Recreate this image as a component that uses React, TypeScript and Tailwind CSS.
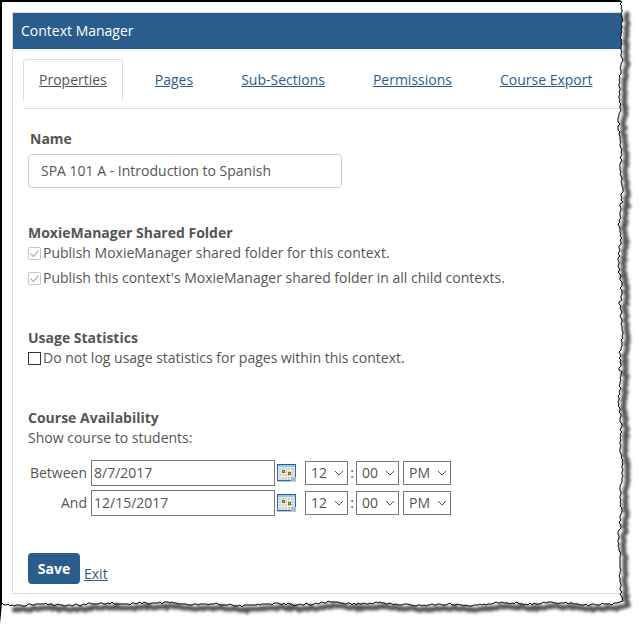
import React from "react";

function n(i: number) {
  const s = Math.sin(i * 12.9898) * 43758.5453;
  return s - Math.floor(s);
}
const edgeR: number[][] = [];
for (let i = 0, y = 0; y < 596; i++, y += 2) {
  const wave = Math.sin(y / 23) * 1.1 + Math.sin(y / 7.3) * 0.9;
  edgeR.push([Math.round(620.5 + wave + (n(i) - 0.5) * 2.5), y]);
}
const edgeB: number[][] = [[622, 597], [623, 601], [617, 603]];
for (let i = 0, x = 614; x > 0; i++, x -= 2) {
  const wave = Math.sin(x / 31) * 0.9 + Math.sin(x / 9.1) * 0.7;
  edgeB.push([x, Math.round(604 + wave + (n(i + 400) - 0.5) * 2.2)]);
}
const pts = [...edgeR, ...edgeB];
const poly = pts.map((p) => p.join(",")).join(" ");
const shadow = pts
  .slice(4, -3)
  .map((p) => `${p[0] + 5},${p[1] + 4}`)
  .join(" ");

function TornEdge() {
  return (
    <svg className="absolute inset-0 pointer-events-none" width="640" height="624" viewBox="0 0 640 624">
      <defs>
        <filter id="blur" x="-5%" y="-5%" width="110%" height="110%">
          <feGaussianBlur stdDeviation="1.6" />
        </filter>
      </defs>
      <polygon points={`${poly} 0,624 640,624 640,0`} fill="#fff" />
      <polyline points={shadow} fill="none" stroke="#555" strokeWidth="5" filter="url(#blur)" />
      <polyline points={poly} fill="none" stroke="#000" strokeWidth="1" />
    </svg>
  );
}

function CalIcon() {
  return (
    <svg width="19" height="18" viewBox="0 0 19 18" className="shrink-0">
      <rect x="0.5" y="0.5" width="18" height="16" fill="#dfe8f2" stroke="#2a6aa8" />
      <rect x="1" y="0" width="17" height="1" fill="#1f5c99" />
      <rect x="1" y="1" width="17" height="2" fill="#9cc4e8" />
      <rect x="2" y="4" width="15" height="12" fill="#cfcfcf" />
      <path d="M4.5 4v12M7.5 4v12M10.5 4v12M13.5 4v12M2 6.5h15M2 9.5h15M2 12.5h15" stroke="#ececec" strokeWidth="1" />
      <rect x="5" y="6" width="3" height="3" fill="#5f7f00" />
      <rect x="6" y="7" width="1" height="1" fill="#c8d800" />
      <rect x="11" y="8" width="3" height="3" fill="#5f7f00" />
      <rect x="12" y="9" width="1" height="1" fill="#c8d800" />
      <rect x="14" y="13" width="5" height="4" fill="#a9bccf" />
      <rect x="0" y="17" width="19" height="1" fill="#c4c4c4" />
    </svg>
  );
}

function Sel({ v, w }: { v: string; w: string }) {
  return (
    <div className={`${w} h-[24px] border border-[#767676] flex items-center justify-between pl-[5px] pr-[3px] text-[#555]`}>
      <span>{v}</span>
      <svg width="10" height="6" viewBox="0 0 10 6" fill="none" stroke="#555" strokeWidth="1">
        <path d="M1 1l4 4 4-4" />
      </svg>
    </div>
  );
}

function DateRow({ label, date, cls }: { label: string; date: string; cls: string }) {
  return (
    <div className={`flex items-center ${cls}`}>
      <span className="w-[59px] text-right">{label}</span>
      <div className="ml-[4px] w-[184px] h-[26px] border border-[#767676] flex items-center pl-[2px]">{date}</div>
      <div className="ml-[2px] w-[28px] flex"><CalIcon /></div>
      <Sel v="12" w="w-[43px]" />
      <span className="w-[8px] text-center leading-none">:</span>
      <Sel v="00" w="w-[43px]" />
      <div className="w-[4px]" />
      <Sel v="PM" w="w-[48px]" />
    </div>
  );
}

function Checked() {
  return (
    <svg width="13" height="13" viewBox="0 0 13 13" className="shrink-0 mr-[2px]">
      <rect x="0.5" y="0.5" width="12" height="12" rx="1" fill="#fff" stroke="#c4c4c4" />
      <path d="M2.5 6.5l3 3 5-6" fill="none" stroke="#b4b4b4" strokeWidth="1.2" />
    </svg>
  );
}

function Tab({ t, active }: { t: string; active?: boolean }) {
  return (
    <div className={active ? "h-[42px] px-[15px] pt-[10px] border border-b-0 border-[#ddd] rounded-t-[4px]" : "h-[42px] px-[16px] pt-[11px]"}>
      <span className={active ? "underline text-[#555]" : "underline text-[#2a5d8c]"}>{t}</span>
    </div>
  );
}

export default function App() {
  return (
    <div
      className="relative w-[640px] h-[624px] overflow-hidden bg-white text-[14px] leading-[20px] text-[#555]"
      style={{ fontFamily: '"Open Sans", sans-serif' }}
    >
      <div className="h-[624px] border-l-2 border-t-2 border-black pl-[10px] pt-[10px]">
        <div className="w-[640px] h-[582px] border border-[#ddd]">
          <div className="h-[36px] bg-[#2a5d8c] text-white pl-[8px] flex items-center">Context Manager</div>
          <div className="ml-[10px] mt-[10px] h-[50px] border-b border-[#ddd] flex gap-[16px] items-start w-[600px]">
            <Tab t="Properties" active />
            <Tab t="Pages" />
            <Tab t="Sub-Sections" />
            <Tab t="Permissions" />
            <Tab t="Course Export" />
          </div>
          <div className="pl-[15px]">
            <div className="pl-[2px] mt-[20px] font-bold">Name</div>
            <div className="mt-[5px] w-[314px] h-[34px] border border-[#ccc] rounded-[4px] pl-[12px] flex items-center">
              SPA 101 A - Introduction to Spanish
            </div>
            <div className="mt-[35px] font-bold">MoxieManager Shared Folder</div>
            <div className="flex items-center"><Checked />Publish MoxieManager shared folder for this context.</div>
            <div className="flex items-center mt-[5px]"><Checked />Publish this context's MoxieManager shared folder in all child contexts.</div>
            <div className="mt-[40px] font-bold">Usage Statistics</div>
            <div className="flex items-center">
              <div className="w-[13px] h-[13px] border border-[#333] mr-[2px] shrink-0" />
              Do not log usage statistics for pages within this context.
            </div>
            <div className="mt-[40px] font-bold">Course Availability</div>
            <div>Show course to students:</div>
            <DateRow label="Between" date="8/7/2017" cls="mt-[12px]" />
            <DateRow label="And" date="12/15/2017" cls="mt-[4px]" />
            <div className="flex items-end mt-[37px]">
              <div className="w-[52px] h-[31px] bg-[#2a5d8c] rounded-[4px] text-white font-bold flex items-center justify-center">Save</div>
              <span className="ml-[4px] underline text-[#2a5d8c] leading-[20px]">Exit</span>
            </div>
          </div>
        </div>
      </div>
      <TornEdge />
    </div>
  );
}
